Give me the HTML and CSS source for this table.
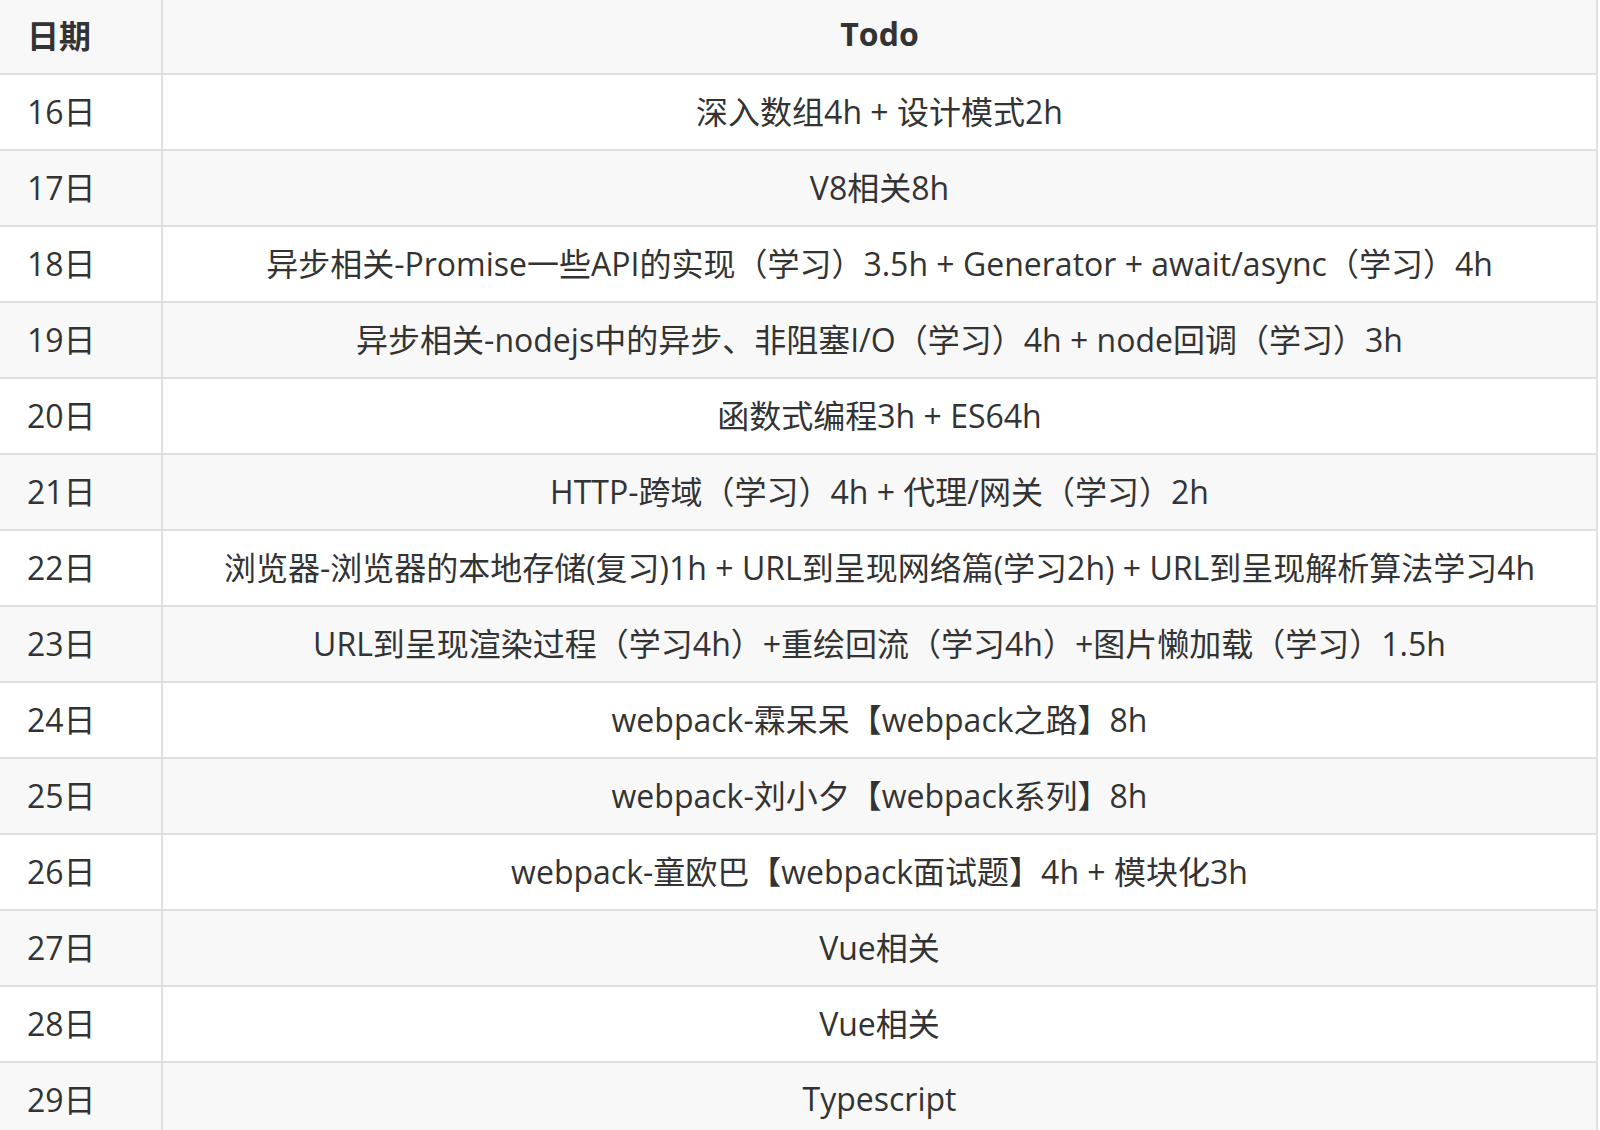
FILE: index.html
```html
<!DOCTYPE html>
<html lang="zh-CN">
<head>
<meta charset="utf-8">
<title>Todo</title>
<link rel="stylesheet" href="styles.css">
</head>
<body>
<table class="plan">
  <thead>
    <tr><th class="date">日期</th><th class="todo">Todo</th></tr>
  </thead>
  <tbody>
    <tr><td class="date">16日</td><td class="todo">深入数组4h + 设计模式2h</td></tr>
    <tr><td class="date">17日</td><td class="todo">V8相关8h</td></tr>
    <tr><td class="date">18日</td><td class="todo">异步相关-Promise一些API的实现（学习）3.5h + Generator + await/async（学习）4h</td></tr>
    <tr><td class="date">19日</td><td class="todo">异步相关-nodejs中的异步、非阻塞I/O（学习）4h + node回调（学习）3h</td></tr>
    <tr><td class="date">20日</td><td class="todo">函数式编程3h + ES64h</td></tr>
    <tr><td class="date">21日</td><td class="todo">HTTP-跨域（学习）4h + 代理/网关（学习）2h</td></tr>
    <tr><td class="date">22日</td><td class="todo">浏览器-浏览器的本地存储(复习)1h + URL到呈现网络篇(学习2h) + URL到呈现解析算法学习4h</td></tr>
    <tr><td class="date">23日</td><td class="todo">URL到呈现渲染过程（学习4h）+重绘回流（学习4h）+图片懒加载（学习）1.5h</td></tr>
    <tr><td class="date">24日</td><td class="todo">webpack-霖呆呆【webpack之路】8h</td></tr>
    <tr><td class="date">25日</td><td class="todo">webpack-刘小夕【webpack系列】8h</td></tr>
    <tr><td class="date">26日</td><td class="todo">webpack-童欧巴【webpack面试题】4h + 模块化3h</td></tr>
    <tr><td class="date">27日</td><td class="todo">Vue相关</td></tr>
    <tr><td class="date">28日</td><td class="todo">Vue相关</td></tr>
    <tr><td class="date">29日</td><td class="todo">Typescript</td></tr>
  </tbody>
</table>
</body>
</html>
```
FILE: styles.css
```css
html, body {
  margin: 0;
  padding: 0;
  background: #ffffff;
  overflow: hidden;
}

.plan {
  border-collapse: separate;
  border-spacing: 0;
  table-layout: fixed;
  width: 1598px;
  font-family: "Open Sans", "Noto Sans CJK SC", sans-serif;
  font-size: 32px;
  color: #333333;
}

.plan th,
.plan td {
  border-right: 2px solid #dfdfdf;
  border-bottom: 2px solid #dfdfdf;
  padding: 0;
  vertical-align: middle;
  white-space: nowrap;
}

.plan thead th {
  height: 67px;
  padding-bottom: 6px;
  background: #f8f8f8;
  font-weight: 700;
}

.plan tbody td {
  height: 70px;
  padding-bottom: 4px;
  font-weight: 400;
}

.plan tbody tr:nth-child(odd) td {
  background: #ffffff;
}

.plan tbody tr:nth-child(even) td {
  background: #f8f8f8;
}

.plan .date {
  width: 134px;
  padding-left: 27px;
  text-align: left;
}

.plan .todo {
  text-align: center;
  padding-left: 20px;
  padding-right: 20px;
}
```
